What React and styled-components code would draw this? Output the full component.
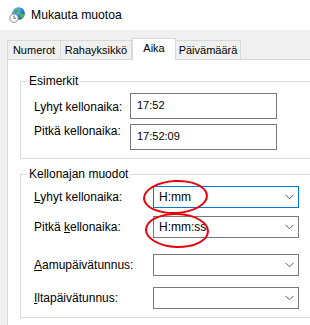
import React from 'react';
import styled, { createGlobalStyle } from 'styled-components';

const Global = createGlobalStyle`
  html, body { margin: 0; padding: 0; background: #f0f0f0; }
  body { font-family: "Liberation Sans", Arial, sans-serif; }
`;

const Window = styled.div`
  position: relative;
  width: 310px;
  height: 325px;
  overflow: hidden;
  background: #f0f0f0;
  color: #000;
  font-size: 12px;
`;

const TitleBar = styled.div`
  height: 30px;
  background: #fff;
  display: flex;
  align-items: center;
  gap: 6px;
  padding-left: 9px;
`;

const Title = styled.span`
  font-size: 12.2px;
  line-height: 16px;
`;

const Body = styled.div`
  padding: 8px 0 0 7px;
`;

const Tabs = styled.div`
  display: flex;
  align-items: flex-end;
  height: 21px;
  position: relative;
  z-index: 1;
`;

const Tab = styled.div`
  box-sizing: border-box;
  width: ${p => p.$w}px;
  height: ${p => (p.$active ? 22 : 19)}px;
  margin-bottom: ${p => (p.$active ? -1 : 0)}px;
  border: 1px solid #d9d9d9;
  border-bottom: none;
  border-left-width: ${p => (p.$first || p.$active ? 1 : 0)}px;
  background: ${p => (p.$active ? '#fff' : '#f0f0f0')};
  display: flex;
  justify-content: center;
  align-items: center;
  padding-bottom: ${p => (p.$active ? 4 : 0)}px;
  font-size: 11px;
  white-space: nowrap;
`;

const Panel = styled.div`
  background: #fff;
  border-top: 1px solid #d9d9d9;
  border-left: 1px solid #d9d9d9;
  height: 280px;
  padding: 14px 0 0 12px;
  box-sizing: border-box;
`;

const Group = styled.fieldset`
  margin: ${p => p.$mt || 0}px -40px 0 0;
  padding: 5px 0 ${p => p.$pb}px 13px;
  border: 1px solid #dcdcdc;
  min-width: 0;
`;

const Legend = styled.legend`
  margin-left: -7px;
  padding: 0 2px;
  line-height: 14px;
`;

const Row = styled.div`
  display: grid;
  grid-template-columns: ${p => p.$label}px ${p => p.$field}px;
  align-items: ${p => (p.$top ? 'start' : 'center')};
  margin-top: ${p => p.$mt || 0}px;
`;

const Label = styled.span`
  line-height: 14px;
  padding-top: ${p => p.$pt || 0}px;
  white-space: nowrap;
`;

const Key = styled.span`
  text-decoration: underline;
`;

const TextBox = styled.div`
  box-sizing: border-box;
  height: 26px;
  border: 1px solid #7a7a7a;
  background: #fff;
  padding: 4px 0 0 6px;
  line-height: 14px;
  font-size: 11px;
`;

const Combo = styled.div`
  box-sizing: border-box;
  height: 22px;
  border: 1px solid ${p => (p.$focus ? '#0078d7' : '#7a7a7a')};
  background: #fff;
  display: flex;
  align-items: center;
  justify-content: space-between;
  padding: 0 4px 0 5px;
`;

const Ring = styled.div`
  position: absolute;
  left: ${p => p.$x}px;
  top: ${p => p.$y}px;
  width: ${p => p.$w}px;
  height: ${p => p.$h}px;
  border: 2.5px solid #e8000b;
  border-radius: 50%;
  box-sizing: border-box;
  transform: rotate(${p => p.$r || 0}deg);
  pointer-events: none;
`;

const Chevron = () => (
  <svg width="9" height="6" viewBox="0 0 9 6">
    <path d="M0.5 0.8 L4.5 4.8 L8.5 0.8" fill="none" stroke="#5a5a5a" strokeWidth="1" />
  </svg>
);

const AppIcon = () => (
  <svg width="16" height="16" viewBox="0 0 16 16">
    <defs>
      <radialGradient id="gl" cx="0.35" cy="0.3" r="0.8">
        <stop offset="0" stopColor="#8fd0ff" />
        <stop offset="0.5" stopColor="#2a86d8" />
        <stop offset="1" stopColor="#0d4f9e" />
      </radialGradient>
    </defs>
    <circle cx="9.5" cy="6.5" r="6.3" fill="url(#gl)" />
    <path d="M6 2.5 C8 1.8 10 2.5 9.5 4.5 C8.8 6 7 5.5 6.5 7 C5.8 6 5 4 6 2.5 Z" fill="#3fae3a" />
    <path d="M11 6.5 C13 6 15 7 15.3 8.5 C14.5 10.5 12.5 11.5 11.5 10.5 C11 9.5 10.3 8 11 6.5 Z" fill="#4cb844" />
    <circle cx="5" cy="11.2" r="4.3" fill="#f4f6f8" stroke="#7d8a96" strokeWidth="0.9" />
    <path d="M5 8.6 V11.3 H7" fill="none" stroke="#5b6670" strokeWidth="0.9" />
  </svg>
);

export default function App() {
  return (
    <>
      <Global />
      <Window>
        <TitleBar>
          <AppIcon />
          <Title>Mukauta muotoa</Title>
        </TitleBar>
        <Body>
          <Tabs>
            <Tab $w={54} $first>Numerot</Tab>
            <Tab $w={71}>Rahayksikkö</Tab>
            <Tab $w={44} $active>Aika</Tab>
            <Tab $w={65}>Päivämäärä</Tab>
          </Tabs>
          <Panel>
            <Group $pb={8}>
              <Legend>Esimerkit</Legend>
              <Row $label={96} $field={147} $top>
                <Label $pt={7}>Lyhyt kellonaika:</Label>
                <TextBox>17:52</TextBox>
              </Row>
              <Row $label={96} $field={147} $top $mt={5}>
                <Label $pt={0}>Pitkä kellonaika:</Label>
                <TextBox>17:52:09</TextBox>
              </Row>
            </Group>
            <Group $mt={8} $pb={8}>
              <Legend>Kellonajan muodot</Legend>
              <Row $label={119} $field={146}>
                <Label><Key>L</Key>yhyt kellonaika:</Label>
                <Combo $focus><span>H:mm</span><Chevron /></Combo>
              </Row>
              <Row $label={119} $field={146} $mt={8}>
                <Label>Pitkä <Key>k</Key>ellonaika:</Label>
                <Combo><span>H:mm:ss</span><Chevron /></Combo>
              </Row>
              <Row $label={119} $field={146} $mt={16}>
                <Label><Key>A</Key>amupäivätunnus:</Label>
                <Combo><span /><Chevron /></Combo>
              </Row>
              <Row $label={119} $field={146} $mt={11}>
                <Label><Key>I</Key>ltapäivätunnus:</Label>
                <Combo><span /><Chevron /></Combo>
              </Row>
            </Group>
          </Panel>
        </Body>
        <Ring $x={143} $y={180} $w={65} $h={34} $r={-3} />
        <Ring $x={145} $y={213} $w={64} $h={35} $r={2} />
      </Window>
    </>
  );
}
